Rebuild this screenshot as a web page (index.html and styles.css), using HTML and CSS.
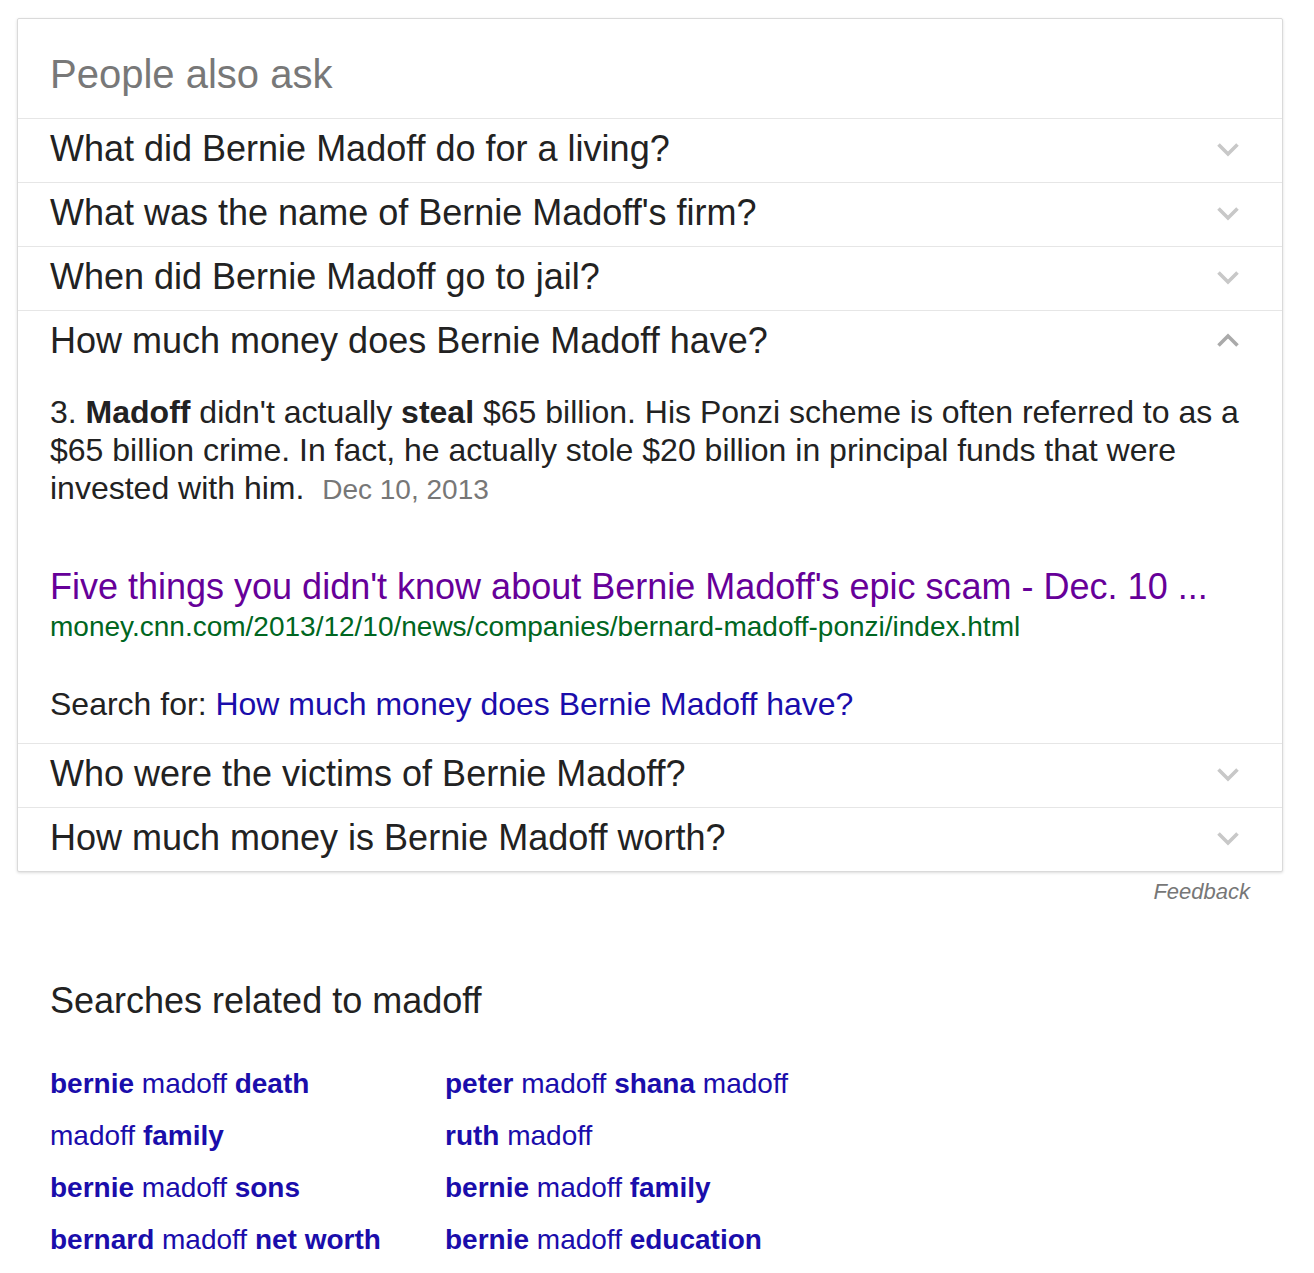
FILE: index.html
```html
<!DOCTYPE html>
<html lang="en">
<head>
<meta charset="utf-8">
<title>People also ask</title>
<link rel="stylesheet" href="styles.css">
</head>
<body>
<div class="page">
  <div class="card">
    <div class="paa-title">People also ask</div>
    <div class="q-row">
      <span class="q-text">What did Bernie Madoff do for a living?</span>
      <svg class="chev" width="24" height="16" viewBox="0 0 24 16"><path d="M2.5 3.5 L12 13 L21.5 3.5" /></svg>
    </div>
    <div class="q-row">
      <span class="q-text">What was the name of Bernie Madoff's firm?</span>
      <svg class="chev" width="24" height="16" viewBox="0 0 24 16"><path d="M2.5 3.5 L12 13 L21.5 3.5" /></svg>
    </div>
    <div class="q-row">
      <span class="q-text">When did Bernie Madoff go to jail?</span>
      <svg class="chev" width="24" height="16" viewBox="0 0 24 16"><path d="M2.5 3.5 L12 13 L21.5 3.5" /></svg>
    </div>
    <div class="q-item open">
      <div class="q-row">
        <span class="q-text">How much money does Bernie Madoff have?</span>
        <svg class="chev up" width="24" height="16" viewBox="0 0 24 16"><path d="M2.5 12.5 L12 3 L21.5 12.5" /></svg>
      </div>
      <div class="answer">
        <div class="snippet">3. <b>Madoff</b> didn't actually <b>steal</b> $65 billion. His Ponzi scheme is often referred to as a $65 billion crime. In fact, he actually stole $20 billion in principal funds that were invested with him. <span class="date">Dec 10, 2013</span></div>
        <div class="result-title">Five things you didn't know about Bernie Madoff's epic scam - Dec. 10 ...</div>
        <div class="result-url">money.cnn.com/2013/12/10/news/companies/bernard-madoff-ponzi/index.html</div>
        <div class="search-for">Search for: <span class="blue">How much money does Bernie Madoff have?</span></div>
      </div>
    </div>
    <div class="q-row">
      <span class="q-text">Who were the victims of Bernie Madoff?</span>
      <svg class="chev" width="24" height="16" viewBox="0 0 24 16"><path d="M2.5 3.5 L12 13 L21.5 3.5" /></svg>
    </div>
    <div class="q-row">
      <span class="q-text">How much money is Bernie Madoff worth?</span>
      <svg class="chev" width="24" height="16" viewBox="0 0 24 16"><path d="M2.5 3.5 L12 13 L21.5 3.5" /></svg>
    </div>
  </div>
  <div class="feedback">Feedback</div>
  <div class="related">
    <div class="related-title">Searches related to madoff</div>
    <div class="related-grid">
      <div class="rel"><b>bernie</b> madoff <b>death</b></div>
      <div class="rel"><b>peter</b> madoff <b>shana</b> madoff</div>
      <div class="rel">madoff <b>family</b></div>
      <div class="rel"><b>ruth</b> madoff</div>
      <div class="rel"><b>bernie</b> madoff <b>sons</b></div>
      <div class="rel"><b>bernie</b> madoff <b>family</b></div>
      <div class="rel"><b>bernard</b> madoff <b>net worth</b></div>
      <div class="rel"><b>bernie</b> madoff <b>education</b></div>
    </div>
  </div>
</div>
</body>
</html>
```
FILE: styles.css
```css
html, body {
  margin: 0;
  padding: 0;
  background: #fff;
}
body {
  font-family: "Liberation Sans", Arial, sans-serif;
  color: #222;
}
.page {
  padding: 18px 0 0 17px;
  width: 1266px;
}
.card {
  border: 1px solid #dadada;
  border-radius: 2px;
  box-shadow: 0 1px 3px rgba(0, 0, 0, 0.14);
  background: #fff;
}
.paa-title {
  font-size: 40px;
  line-height: 48px;
  padding: 31px 32px 20px;
  color: #787878;
}
.q-row {
  border-top: 1px solid #e6e6e6;
  display: flex;
  align-items: center;
  justify-content: space-between;
  padding: 0 42px 3px 32px;
  height: 60px;
}
.q-text {
  font-size: 36px;
  line-height: 60px;
  color: #222;
  white-space: nowrap;
}
.chev {
  flex: none;
  fill: none;
  stroke: #c8c8c8;
  stroke-width: 3.6;
  margin-bottom: 1px;
}
.chev.up {
  stroke: #aaaaaa;
}
.answer {
  padding: 19px 30px 20px 32px;
}
.snippet {
  font-size: 32px;
  line-height: 38px;
  color: #222;
}
.snippet b {
  font-weight: bold;
}
.date {
  font-size: 28px;
  line-height: 1;
  color: #777;
  margin-left: 9px;
}
.result-title {
  font-size: 36px;
  line-height: 44px;
  margin-top: 58px;
  color: #660099;
  white-space: nowrap;
}
.result-url {
  font-size: 28px;
  line-height: 36px;
  color: #006621;
  white-space: nowrap;
}
.search-for {
  font-size: 32px;
  line-height: 38px;
  margin-top: 40px;
  color: #222;
}
.blue {
  color: #1a0dab;
}
.feedback {
  margin-top: 7px;
  padding-right: 33px;
  text-align: right;
  font-size: 22px;
  line-height: 26px;
  font-style: italic;
  color: #777;
}
.related {
  padding-left: 33px;
  margin-top: 74px;
}
.related-title {
  font-size: 36px;
  line-height: 44px;
  color: #222;
}
.related-grid {
  margin-top: 35px;
  display: grid;
  grid-template-columns: 395px 1fr;
}
.rel {
  font-size: 28px;
  line-height: 52px;
  color: #1a0dab;
  white-space: nowrap;
}
.rel b {
  font-weight: bold;
}
```
